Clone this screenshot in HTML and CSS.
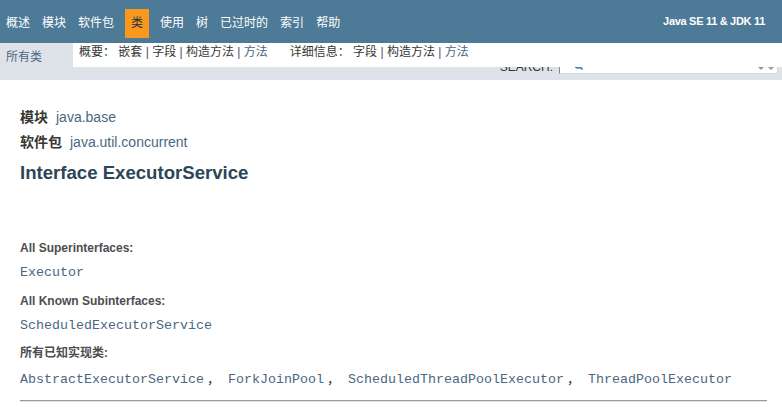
FILE: index.html
```
<!DOCTYPE html>
<html lang="zh">
<head>
<meta charset="utf-8">
<title>ExecutorService (Java SE 11 &amp; JDK 11 )</title>
<link rel="stylesheet" href="styles.css">
</head>
<body>
<header class="top-nav">
  <ul class="nav-list">
    <li>概述</li>
    <li>模块</li>
    <li>软件包</li>
    <li class="active">类</li>
    <li>使用</li>
    <li>树</li>
    <li>已过时的</li>
    <li>索引</li>
    <li>帮助</li>
  </ul>
  <div class="about">Java SE 11 &amp; JDK 11</div>
</header>
<div class="sub-nav">
  <div class="all-classes">所有类</div>
  <div class="sub-main">
    <div class="sub-lists">
      <ul class="sub-list first">
        <li>概要：&nbsp;嵌套&nbsp;<span class="bar">|</span>&nbsp;字段&nbsp;<span class="bar">|</span>&nbsp;构造方法&nbsp;<span class="bar">|</span>&nbsp;<a class="lnk">方法</a></li>
      </ul>
      <ul class="sub-list">
        <li>详细信息：&nbsp;字段&nbsp;<span class="bar">|</span>&nbsp;构造方法&nbsp;<span class="bar">|</span>&nbsp;<a class="lnk">方法</a></li>
      </ul>
    </div>
    <div class="search">
      <label class="search-label">SEARCH:</label>
      <span class="search-input">
        <svg class="glass" width="9" height="9" viewBox="0 0 9 9"><circle cx="4" cy="4" r="3" fill="none" stroke="#2f7fc1" stroke-width="1.6"/><path d="M6 6 L8.5 8.5" stroke="#2f7fc1" stroke-width="1.6"/></svg>
        <span class="resets"><span class="tri"></span><span class="tri"></span></span>
      </span>
    </div>
  </div>
</div>
<main class="content">
  <div class="sub-title"><span class="label">模块</span><a class="lnk">java.base</a></div>
  <div class="sub-title second"><span class="label">软件包</span><a class="lnk">java.util.concurrent</a></div>
  <h2 class="title">Interface ExecutorService</h2>
  <dl class="desc">
    <dt>All Superinterfaces:</dt>
    <dd><a class="code">Executor</a></dd>
    <dt>All Known Subinterfaces:</dt>
    <dd><a class="code">ScheduledExecutorService</a></dd>
    <dt>所有已知实现类:</dt>
    <dd><a class="code">AbstractExecutorService</a><span class="sep">，</span><a class="code">ForkJoinPool</a><span class="sep">，</span><a class="code">ScheduledThreadPoolExecutor</a><span class="sep">，</span><a class="code">ThreadPoolExecutor</a></dd>
  </dl>
  <hr class="rule">
</main>
</body>
</html>
```
FILE: styles.css
```
html, body {
  margin: 0;
  padding: 0;
  background: #ffffff;
}
body {
  font-family: "Liberation Sans", "Noto Sans CJK SC", sans-serif;
  font-size: 14px;
  color: #353833;
}
ul {
  list-style: none;
  margin: 0;
  padding: 0;
}
.top-nav {
  display: flex;
  align-items: flex-start;
  height: 43px;
  box-sizing: border-box;
  padding-top: 9px;
  background: #4d7a97;
  color: #ffffff;
  font-size: 12px;
}
.nav-list {
  display: flex;
}
.nav-list li {
  padding: 5px 6px;
  line-height: 19px;
}
.nav-list li.active {
  margin: 0 5px;
  background: #f8981d;
  color: #253441;
}
.about {
  margin-left: auto;
  margin-top: 6px;
  padding-right: 17px;
  font-size: 11px;
  line-height: 13px;
  font-weight: bold;
  letter-spacing: -0.3px;
}
.sub-nav {
  display: flex;
  height: 37px;
  background: #dee3e9;
  font-size: 12px;
}
.all-classes {
  width: 67px;
  padding: 6px 0 0 6px;
  line-height: 17px;
  color: #4a6782;
}
.sub-main {
  flex: 1;
  display: flex;
  flex-direction: column;
}
.sub-lists {
  position: relative;
  z-index: 1;
  display: flex;
  height: 24px;
  padding-left: 6px;
  background: #ffffff;
  line-height: 18px;
}
.sub-list.first {
  margin-right: 22px;
}
.bar {
  color: #5c4768;
}
.lnk {
  color: #4a6782;
  text-decoration: none;
}
.search {
  display: flex;
  justify-content: flex-end;
  align-items: flex-start;
  margin-top: -10px;
  padding-right: 4px;
}
.search-label {
  margin-top: 2px;
  line-height: 16px;
  color: #353833;
}
.search-input {
  display: flex;
  align-items: flex-start;
  box-sizing: border-box;
  width: 219px;
  height: 15px;
  margin: 2px 0 0 6px;
  padding: 1px 3px 0 14px;
  background: #ffffff;
  border: 1px solid;
  border-color: #8a8a8a #d6d6d6 #d6d6d6 #8a8a8a;
}
.glass {
  margin-top: 0;
}
.resets {
  display: flex;
  gap: 4px;
  margin-left: auto;
  margin-top: 6px;
}
.tri {
  width: 0;
  height: 0;
  border-left: 3px solid transparent;
  border-right: 3px solid transparent;
  border-top: 3px solid #9a9a9a;
}
.content {
  padding: 0 15px 0 20px;
}
.sub-title {
  display: flex;
  gap: 8px;
  margin-top: 27px;
  line-height: 20px;
}
.sub-title.second {
  margin-top: 5px;
}
.sub-title .label {
  font-weight: bold;
}
.title {
  margin: 10px 0 0;
  font-size: 18.6px;
  line-height: 22px;
  color: #2c4557;
}
.desc {
  margin: 56px 0 0;
}
.desc dt {
  font-size: 12px;
  line-height: 16px;
  font-weight: bold;
  color: #4e4e4e;
}
.desc dd {
  margin: 8px 0 11.5px 0;
  font-family: "Liberation Mono", "Noto Sans CJK SC", monospace;
  font-size: 13.33px;
  line-height: 17px;
  white-space: nowrap;
}
.code {
  color: #4a6782;
  text-decoration: none;
}
.sep {
  display: inline-block;
  width: 24px;
  padding-left: 3px;
  box-sizing: border-box;
  font-family: "Noto Sans CJK SC", sans-serif;
  font-size: 13px;
  color: #353833;
}
.rule {
  height: 0;
  margin: 5.5px 0 0;
  border: 0;
  border-top: 1px solid #9a9a9a;
  border-bottom: 1px solid #e4e4e4;
}
```
